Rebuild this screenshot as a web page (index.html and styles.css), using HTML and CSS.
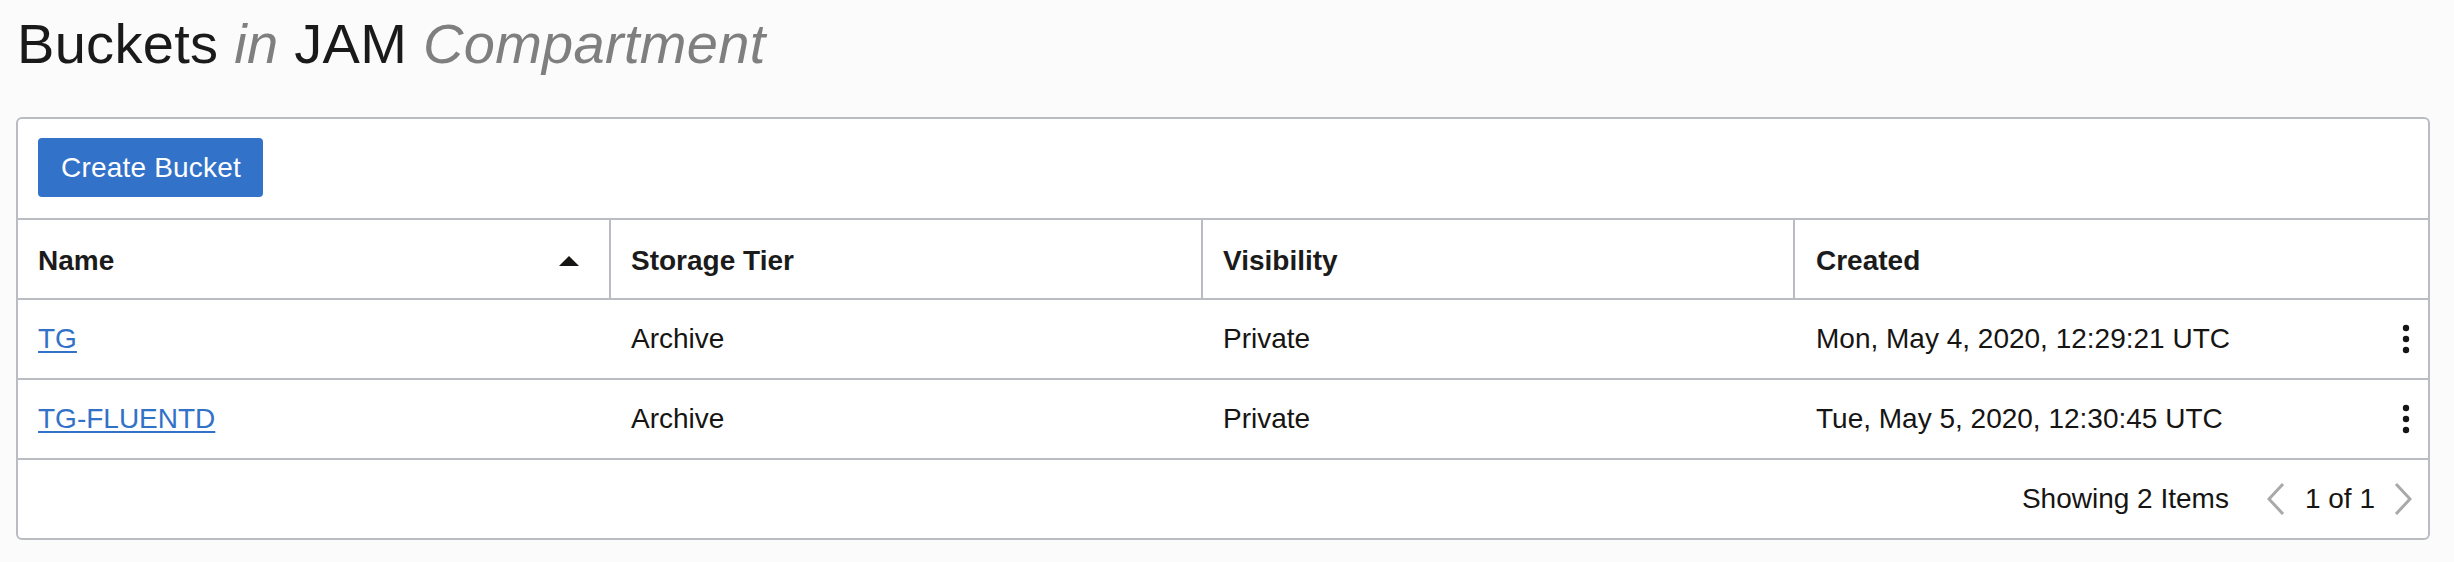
FILE: index.html
```html
<!DOCTYPE html>
<html lang="en">
<head>
<meta charset="utf-8">
<title>Buckets in JAM Compartment</title>
<link rel="stylesheet" href="styles.css">
</head>
<body>
<h1 class="title">Buckets <em>in</em> JAM <em>Compartment</em></h1>
<div class="panel">
  <div class="toolbar">
    <button class="btn" type="button">Create Bucket</button>
  </div>
  <div class="row head">
    <div class="cell hcell sortable">Name
      <svg class="sort" width="20" height="10" viewBox="0 0 20 10"><polygon points="10,0 20,10 0,10" fill="#161513"/></svg>
    </div>
    <div class="cell hcell">Storage Tier</div>
    <div class="cell hcell">Visibility</div>
    <div class="cell hcell last">Created</div>
  </div>
  <div class="row">
    <div class="cell"><a class="link" href="#">TG</a></div>
    <div class="cell">Archive</div>
    <div class="cell">Private</div>
    <div class="cell last">Mon, May 4, 2020, 12:29:21 UTC
      <svg class="kebab" width="8" height="30" viewBox="0 0 8 30"><circle cx="4" cy="4" r="3.2" fill="#161513"/><circle cx="4" cy="15" r="3.2" fill="#161513"/><circle cx="4" cy="26" r="3.2" fill="#161513"/></svg>
    </div>
  </div>
  <div class="row">
    <div class="cell"><a class="link" href="#">TG-FLUENTD</a></div>
    <div class="cell">Archive</div>
    <div class="cell">Private</div>
    <div class="cell last">Tue, May 5, 2020, 12:30:45 UTC
      <svg class="kebab" width="8" height="30" viewBox="0 0 8 30"><circle cx="4" cy="4" r="3.2" fill="#161513"/><circle cx="4" cy="15" r="3.2" fill="#161513"/><circle cx="4" cy="26" r="3.2" fill="#161513"/></svg>
    </div>
  </div>
  <div class="footer">
    <span class="count">Showing 2 Items</span>
    <svg class="chev" width="18" height="32" viewBox="0 0 18 32"><polyline points="16,1 2,16 16,31" fill="none" stroke="#a9a9a9" stroke-width="3"/></svg>
    <span class="pages">1 of 1</span>
    <svg class="chev" width="18" height="32" viewBox="0 0 18 32"><polyline points="2,1 16,16 2,31" fill="none" stroke="#a9a9a9" stroke-width="3"/></svg>
  </div>
</div>
</body>
</html>
```
FILE: styles.css
```css
html, body {
  margin: 0;
  padding: 0;
  background: #fbfbfb;
  font-family: "Liberation Sans", Arial, sans-serif;
  color: #161513;
}

.title {
  margin: 0;
  padding: 16px 0 0 17px;
  font-size: 56px;
  line-height: 56px;
  font-weight: normal;
  letter-spacing: 0.3px;
  color: #1a1a1a;
  height: 56px;
}

.title em {
  font-style: italic;
  color: #7f7f7f;
}

.panel {
  margin: 45px 0 0 16px;
  width: 2414px;
  box-sizing: border-box;
  background: #ffffff;
  border: 2px solid #b9bcc0;
  border-radius: 6px;
}

.toolbar {
  padding: 19px 20px 21px;
  border-bottom: 2px solid #b9bcc0;
}

.btn {
  display: block;
  height: 59px;
  padding: 0 22px 0 23px;
  border: none;
  border-radius: 4px;
  background: #3272c9;
  color: #ffffff;
  font-family: "Liberation Sans", Arial, sans-serif;
  font-size: 28px;
  line-height: 59px;
  letter-spacing: 0.2px;
}

.row {
  display: grid;
  grid-template-columns: 593px 592px 592px 1fr;
  height: 78px;
  border-bottom: 2px solid #b9bcc0;
  font-size: 28px;
}

.cell {
  display: flex;
  align-items: center;
  padding: 0 20px;
  white-space: nowrap;
}

.cell.last {
  padding-left: 21px;
  justify-content: space-between;
  padding-right: 18px;
}

.hcell {
  font-weight: bold;
  color: #1b1b1b;
  border-right: 2px solid #b9bcc0;
  padding-top: 3px;
}

.hcell.last {
  border-right: none;
}

.sortable {
  justify-content: space-between;
  padding-right: 30px;
}

.sort {
  display: block;
}

.link {
  color: #3172c8;
  text-decoration: underline;
  text-underline-offset: 3px;
  text-decoration-thickness: 2px;
}

.kebab {
  display: block;
}

.footer {
  display: flex;
  align-items: center;
  justify-content: flex-end;
  height: 78px;
  padding-right: 16px;
  font-size: 28px;
}

.count {
  margin-right: 38px;
}

.pages {
  margin: 0 19px 0 20px;
}

.chev {
  display: block;
}
```
